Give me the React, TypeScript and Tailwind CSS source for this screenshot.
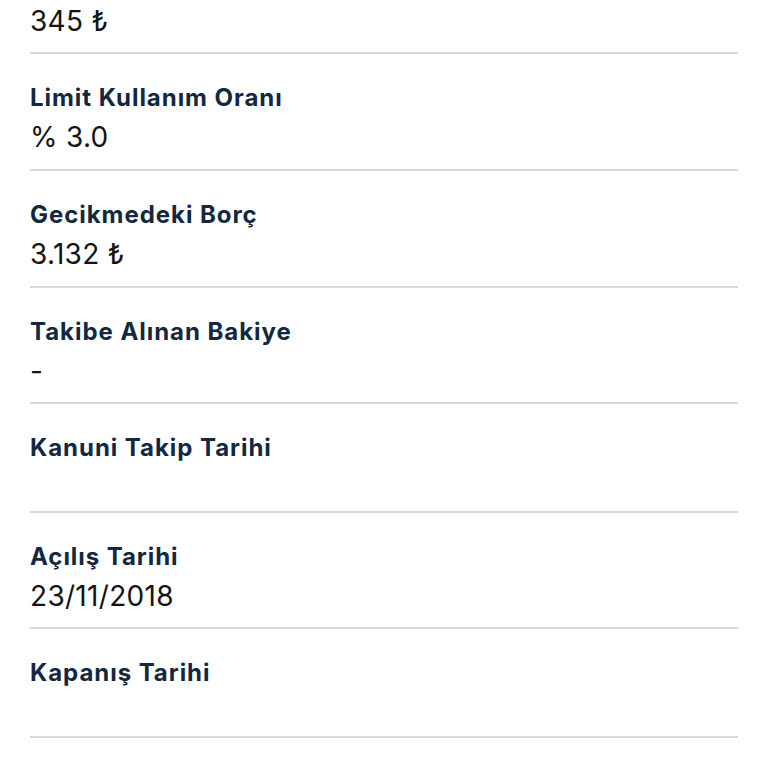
import React from "react";

type Item = { label: string; value: string; pb: string };

const items: Item[] = [
  { label: "Limit Kullanım Oranı", value: "% 3.0", pb: "pb-[16px]" },
  { label: "Gecikmedeki Borç", value: "3.132 ₺", pb: "pb-[16px]" },
  { label: "Takibe Alınan Bakiye", value: "-", pb: "pb-[15px]" },
  { label: "Kanuni Takip Tarihi", value: "", pb: "pb-[14px]" },
  { label: "Açılış Tarihi", value: "23/11/2018", pb: "pb-[15px]" },
  { label: "Kapanış Tarihi", value: "", pb: "pb-[14px]" },
];

function Divider() {
  return <div className="h-[2px] bg-[#d9d9d9]" />;
}

export default function App() {
  return (
    <div
      className="w-[768px] h-[768px] overflow-hidden bg-white"
      style={{ fontFamily: "Inter, 'Noto Sans', sans-serif" }}
    >
      <div className="mx-[30px]">
        <div className="pt-[5px] pb-[15px]">
          <div className="text-[28px] leading-[32px] tracking-[0.3px] text-[#141414]">345 ₺</div>
        </div>
        <Divider />
        {items.map((it) => (
          <div key={it.label}>
            <div className={`pt-[30px] flex flex-col ${it.pb}`}>
              <div className="text-[24px] leading-[28px] font-bold tracking-[0.95px] text-[#13283f]">
                {it.label}
              </div>
              {it.value ? (
                <div className="mt-[9px] text-[28px] leading-[32px] tracking-[0.3px] text-[#141414]">
                  {it.value}
                </div>
              ) : (
                <div className="h-[35px]" />
              )}
            </div>
            <Divider />
          </div>
        ))}
      </div>
    </div>
  );
}
